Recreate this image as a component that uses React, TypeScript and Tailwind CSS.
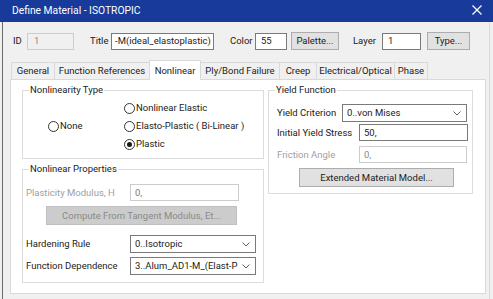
import React from "react";

function Radio({ checked, label }: { checked?: boolean; label: string }) {
  return (
    <div className="flex h-[18px] items-center">
      <span className="flex h-[11px] w-[11px] shrink-0 items-center justify-center rounded-full border border-[#333333] bg-white">
        {checked && <span className="h-[5px] w-[5px] rounded-full bg-[#1a1a1a]" />}
      </span>
      <span className="ml-[1px]">{label}</span>
    </div>
  );
}

function Chevron() {
  return (
    <svg width="8" height="5" viewBox="0 0 8 5" className="shrink-0">
      <polyline points="0.5,0.5 4,4 7.5,0.5" fill="none" stroke="#606060" strokeWidth="1" />
    </svg>
  );
}

function Select({ value, className }: { value: string; className: string }) {
  return (
    <div className={"flex h-[18px] shrink-0 items-center overflow-hidden border border-[#7a7a7a] bg-white pl-[4px] pr-[5px] " + className}>
      <span className="flex-1 overflow-hidden whitespace-nowrap">{value}</span>
      <Chevron />
    </div>
  );
}

function Tab({ label, active, className }: { label: string; active?: boolean; className: string }) {
  if (active) {
    return (
      <div className={"relative z-10 -ml-px flex h-[20px] shrink-0 items-center justify-center whitespace-nowrap border-l border-r border-t border-[#d9d9d9] bg-white " + className}>
        {label}
      </div>
    );
  }
  return (
    <div className={"-ml-px flex h-[18px] shrink-0 items-center justify-center whitespace-nowrap border border-[#d9d9d9] bg-[#f0f0f0] first:ml-0 " + className}>
      {label}
    </div>
  );
}

export default function App() {
  return (
    <div className="flex h-[299px] w-[493px] flex-col overflow-hidden bg-[#f0f0f0] font-['Roboto',sans-serif] text-[9.5px] leading-[12px] text-[#222222]">
      {/* Title bar */}
      <div className="flex h-[22px] shrink-0 items-center justify-between bg-[#173a9b] pl-[12px] pr-[11px] text-[10.3px] text-white">
        <span>Define Material - ISOTROPIC</span>
        <svg width="10" height="10" viewBox="0 0 10 10" className="-mt-[3px]">
          <line x1="0.5" y1="0.5" x2="9.5" y2="9.5" stroke="white" strokeWidth="1.2" />
          <line x1="9.5" y1="0.5" x2="0.5" y2="9.5" stroke="white" strokeWidth="1.2" />
        </svg>
      </div>

      {/* Body */}
      <div className="ml-[2px] mr-[3px] flex flex-1 flex-col border-l border-r border-l-[#6b6b6b] border-r-[#dadada] pb-[5px] pl-[7px] pr-[3px] pt-[10px]">
        {/* Row 1 */}
        <div className="flex h-[18px] items-center">
          <span className="ml-[3px] w-[14px] shrink-0">ID</span>
          <div className="flex h-[17px] w-[47px] shrink-0 items-center border border-[#cccccc] bg-[#f0f0f0] pl-[6px] text-[#8a8a8a]">1</div>
          <span className="ml-[16px] w-[21px] shrink-0">Title</span>
          <div className="flex h-[17px] w-[103px] shrink-0 items-center overflow-hidden whitespace-nowrap border border-[#7a7a7a] bg-white pl-[3px]">-M(ideal_elastoplastic)</div>
          <span className="ml-[16px] w-[25px] shrink-0">Color</span>
          <div className="flex h-[17px] w-[32px] shrink-0 items-center border border-[#7a7a7a] bg-white pl-[5px]">55</div>
          <button className="ml-[4px] flex h-[18px] w-[48px] shrink-0 items-center justify-center border border-[#adadad] bg-[#e1e1e1]">Palette...</button>
          <span className="ml-[14px] w-[29px] shrink-0">Layer</span>
          <div className="flex h-[17px] w-[39px] shrink-0 items-center border border-[#7a7a7a] bg-white pl-[5px]">1</div>
          <button className="ml-[6px] flex h-[18px] w-[43px] shrink-0 items-center justify-center border border-[#adadad] bg-[#e1e1e1]">Type...</button>
        </div>

        {/* Tabs */}
        <div className="relative z-10 -mb-px ml-[1px] mt-[10px] flex h-[20px] items-end">
          <Tab label="General" className="w-[44px]" />
          <Tab label="Function References" className="w-[96px]" />
          <Tab label="Nonlinear" active className="w-[52px]" />
          <Tab label="Ply/Bond Failure" className="w-[80px]" />
          <Tab label="Creep" className="w-[38px]" />
          <Tab label="Electrical/Optical" className="w-[79px]" />
          <Tab label="Phase" className="w-[34px]" />
        </div>

        {/* Panel */}
        <div className="flex flex-1 border border-[#d9d9d9] bg-white pl-[11px] pt-[4px]">
          {/* Left column */}
          <div className="flex w-[242px] shrink-0 flex-col">
            <fieldset className="h-[75px] border border-[#dcdcdc]">
              <legend className="ml-[6px] px-[1px] leading-[12px]">Nonlinearity Type</legend>
              <div className="flex pt-[3px]">
                <div className="flex w-[101px] shrink-0 items-center pl-[25px]">
                  <Radio label="None" />
                </div>
                <div className="flex flex-col">
                  <Radio label="Nonlinear Elastic" />
                  <Radio label="Elasto-Plastic ( Bi-Linear )" />
                  <Radio label="Plastic" checked />
                </div>
              </div>
            </fieldset>

            <fieldset className="mt-[4px] h-[120px] border border-[#dcdcdc]">
              <legend className="ml-[6px] px-[1px] leading-[12px]">Nonlinear Properties</legend>
              <div className="flex flex-col pl-[3px] pt-[9px]">
                <div className="flex h-[17px] items-center">
                  <span className="w-[104px] shrink-0 text-[#a0a0a0]">Plasticity Modulus, H</span>
                  <div className="flex h-[17px] w-[109px] shrink-0 items-center border border-[#cccccc] bg-white pl-[4px] text-[#7a7a7a]">0,</div>
                </div>
                <button className="ml-[20px] mt-[5px] flex h-[19px] w-[191px] items-center justify-center border border-[#bfbfbf] bg-[#cccccc] text-[#8a8a8a]">
                  Compute From Tangent Modulus, Et...
                </button>
                <div className="mt-[10px] flex h-[18px] items-center">
                  <span className="w-[104px] shrink-0">Hardening Rule</span>
                  <Select value="0..Isotropic" className="w-[126px]" />
                </div>
                <div className="mt-[4px] flex h-[18px] items-center">
                  <span className="w-[104px] shrink-0">Function Dependence</span>
                  <Select value="3..Alum_AD1-M_(Elast-P" className="w-[126px]" />
                </div>
              </div>
            </fieldset>
          </div>

          {/* Right column */}
          <div className="ml-[4px] flex w-[205px] shrink-0 flex-col">
            <fieldset className="h-[110px] border border-[#dcdcdc]">
              <legend className="ml-[6px] px-[1px] leading-[12px]">Yield Function</legend>
              <div className="flex flex-col pl-[8px] pt-[8px]">
                <div className="flex h-[18px] items-center">
                  <span className="w-[65px] shrink-0">Yield Criterion</span>
                  <Select value="0..von Mises" className="w-[125px]" />
                </div>
                <div className="mt-[2px] flex h-[17px] items-center">
                  <span className="w-[82px] shrink-0">Initial Yield Stress</span>
                  <div className="flex h-[17px] w-[109px] shrink-0 items-center border border-[#7a7a7a] bg-white pl-[4px]">50,</div>
                </div>
                <div className="mt-[5px] flex h-[17px] items-center">
                  <span className="w-[82px] shrink-0 text-[#a0a0a0]">Friction Angle</span>
                  <div className="flex h-[17px] w-[108px] shrink-0 items-center border border-[#cccccc] bg-white pl-[4px] text-[#8a8a8a]">0,</div>
                </div>
                <button className="ml-[22px] mt-[5px] flex h-[19px] w-[155px] items-center justify-center border border-[#adadad] bg-[#e1e1e1]">
                  Extended Material Model...
                </button>
              </div>
            </fieldset>
          </div>
        </div>
      </div>
    </div>
  );
}
